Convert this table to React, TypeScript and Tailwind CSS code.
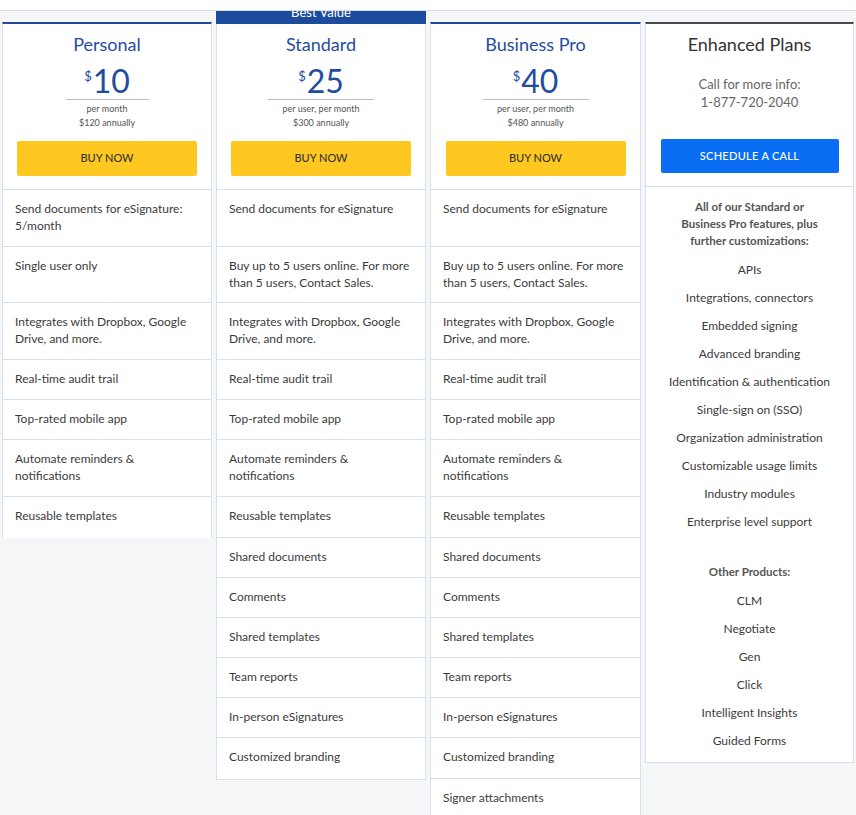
import React from "react";

const ROW_H = [57, 56, 57, 40, 40, 57, 41, 40, 40, 40, 40, 40, 41, 40, 40, 40];
const ROW_CLASSES: Record<number, string> = {
  57: "h-[57px]",
  56: "h-[56px]",
  41: "h-[41px]",
  40: "h-[40px]",
};

const personal = [
  "Send documents for eSignature: 5/month",
  "Single user only",
  "Integrates with Dropbox, Google Drive, and more.",
  "Real-time audit trail",
  "Top-rated mobile app",
  "Automate reminders & notifications",
  "Reusable templates",
];

const standard = [
  "Send documents for eSignature",
  "Buy up to 5 users online. For more than 5 users, Contact Sales.",
  "Integrates with Dropbox, Google Drive, and more.",
  "Real-time audit trail",
  "Top-rated mobile app",
  "Automate reminders & notifications",
  "Reusable templates",
  "Shared documents",
  "Comments",
  "Shared templates",
  "Team reports",
  "In-person eSignatures",
  "Customized branding",
];

const business = [...standard, "Signer attachments"];

const enhancedItems = [
  "APIs",
  "Integrations, connectors",
  "Embedded signing",
  "Advanced branding",
  "Identification & authentication",
  "Single-sign on (SSO)",
  "Organization administration",
  "Customizable usage limits",
  "Industry modules",
  "Enterprise level support",
];

const otherProducts = ["CLM", "Negotiate", "Gen", "Click", "Intelligent Insights", "Guided Forms"];

function Features({ items, lastBorder }: { items: string[]; lastBorder: boolean }) {
  return (
    <div>
      {items.map((t, i) => {
        const h = ROW_H[i] ?? 40;
        const isLast = i === items.length - 1;
        return (
          <div
            key={i}
            className={`${ROW_CLASSES[h]} box-border pl-[12px] pr-[12px] pt-[10px] text-[12px] leading-[17px] text-[#3b3b3b] ${
              isLast && !lastBorder ? "" : "border-b border-[#d8e0ee]"
            }`}
          >
            {t}
          </div>
        );
      })}
    </div>
  );
}

function PlanHeader({
  title,
  price,
  sub,
  annual,
  lineW,
}: {
  title: string;
  price: string;
  sub: string;
  annual: string;
  lineW: string;
}) {
  return (
    <div className="flex h-[166px] flex-col items-center border-b border-[#d8e0ee] pt-[8px]">
      <div className="text-[18px] leading-[24px] text-[#1f4c9f]">{title}</div>
      <div className="mt-[7px] flex h-[36px] items-start justify-center text-[#1f4c9f]">
        <span className="mt-[6px] mr-[1px] text-[13px] leading-[14px]">$</span>
        <span className="text-[32px] leading-[36px]">{price}</span>
      </div>
      <div className={`${lineW} h-px bg-[#bdbdbd]`} />
      <div className="mt-[2px] text-[9px] leading-[14px] text-[#555]">{sub}</div>
      <div className="text-[9px] leading-[14px] text-[#555]">{annual}</div>
      <div className="mt-[11px] flex h-[35px] w-[180px] items-center justify-center rounded-[2px] bg-[#ffc820] text-[11px] font-medium text-[#333]">
        BUY NOW
      </div>
    </div>
  );
}

export default function App() {
  return (
    <div
      className="min-h-screen bg-[#f5f6f8]"
      style={{ fontFamily: "Lato, 'Noto Sans', sans-serif" }}
    >
      <div className="h-[11px] border-b border-[#dcdcdc] bg-white" />
      <div className="flex items-start pl-[2px]">
        {/* Personal */}
        <div className="mt-[11px] w-[210px] border-x border-t-2 border-x-[#d8e0ee] border-t-[#1d4aa0] bg-white">
          <PlanHeader title="Personal" price="10" sub="per month" annual="$120 annually" lineW="w-[83px]" />
          <Features items={personal} lastBorder={false} />
        </div>

        {/* Standard */}
        <div className="ml-[4px] w-[210px] bg-white">
          <div className="h-[13px] overflow-hidden bg-[#1c4a9d] text-center">
            <div className="-mt-[6px] text-[13px] leading-[14px] text-white">Best Value</div>
          </div>
          <div className="border-x border-b border-[#d8e0ee]">
            <PlanHeader title="Standard" price="25" sub="per user, per month" annual="$300 annually" lineW="w-[106px]" />
            <Features items={standard} lastBorder={false} />
          </div>
        </div>

        {/* Business Pro */}
        <div className="ml-[4px] mt-[11px] w-[211px] border-x border-t-2 border-x-[#d8e0ee] border-t-[#1d4aa0] bg-white">
          <PlanHeader title="Business Pro" price="40" sub="per user, per month" annual="$480 annually" lineW="w-[106px]" />
          <Features items={business} lastBorder={true} />
        </div>

        {/* Enhanced */}
        <div className="ml-[4px] mt-[11px] w-[209px] border-x border-b border-t-2 border-x-[#d8e0ee] border-b-[#d8e0ee] border-t-[#4a4a4a] bg-white">
          <div className="flex h-[163px] flex-col items-center border-b border-[#d8e0ee] pt-[8px]">
            <div className="text-[18px] leading-[24px] text-[#333]">Enhanced Plans</div>
            <div className="mt-[19px] text-[13px] leading-[18px] text-[#666]">Call for more info:</div>
            <div className="text-[13px] leading-[18px] text-[#666]">1-877-720-2040</div>
            <div className="mt-[28px] flex h-[34px] w-[178px] items-center justify-center rounded-[2px] bg-[#0a6ef5] text-[11px] font-medium tracking-[0.3px] text-white">
              SCHEDULE A CALL
            </div>
          </div>
          <div className="flex flex-col items-center px-[10px] pt-[11px] pb-[13px] text-center">
            <div className="text-[11.5px] font-bold leading-[17px] text-[#555]">
              All of our Standard or
              <br />
              Business Pro features, plus
              <br />
              further customizations:
            </div>
            <div className="mt-[12px] flex flex-col gap-[11px]">
              {enhancedItems.map((t) => (
                <div key={t} className="text-[12px] leading-[17px] text-[#3b3b3b]">
                  {t}
                </div>
              ))}
            </div>
            <div className="mt-[33px] text-[11.5px] font-bold leading-[17px] text-[#555]">Other Products:</div>
            <div className="mt-[12px] flex flex-col gap-[11px]">
              {otherProducts.map((t) => (
                <div key={t} className="text-[12px] leading-[17px] text-[#3b3b3b]">
                  {t}
                </div>
              ))}
            </div>
          </div>
        </div>
      </div>
    </div>
  );
}
